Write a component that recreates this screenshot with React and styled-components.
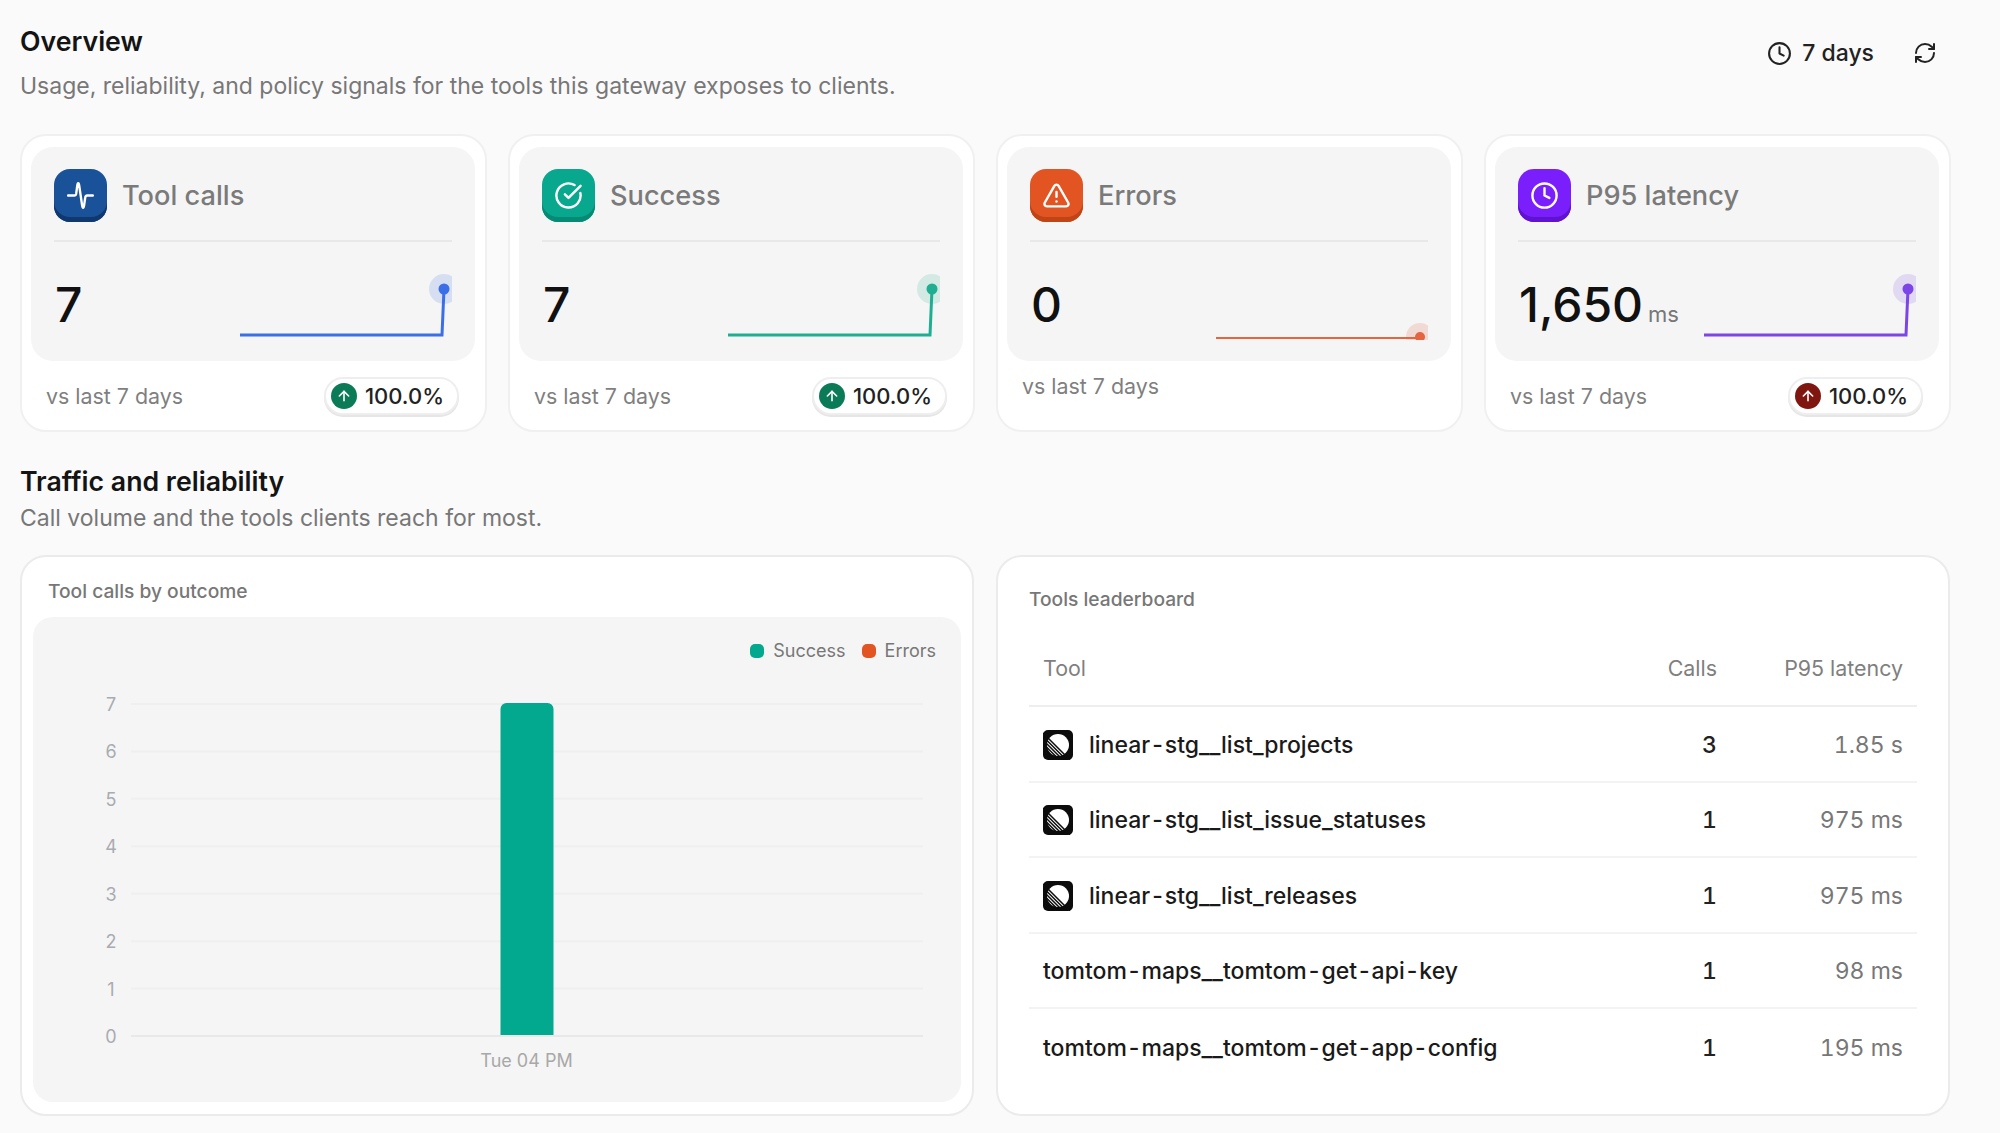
import React from 'react';
import styled, { createGlobalStyle } from 'styled-components';
import { ArrowUp, CircleCheckBig, Clock, RefreshCw, TriangleAlert } from 'lucide-react';

const GlobalStyle = createGlobalStyle`
  html, body {
    margin: 0;
    background: #fafafa;
    font-family: 'Inter', 'Liberation Sans', sans-serif;
    color: #111;
  }
  * { box-sizing: border-box; }
`;

const Page = styled.div`
  width: 2000px;
  height: 1133px;
  overflow: hidden;
  padding: 25px 49px 0 20px;
`;

const TopRow = styled.div`
  display: flex;
  justify-content: space-between;
  align-items: flex-start;
`;

const Heading = styled.h2`
  margin: ${(p) => p.$top || 0}px 0 0;
  font-size: 26.7px;
  line-height: 32px;
  font-weight: 600;
  color: #141414;
`;

const SubHeading = styled.p`
  margin: ${(p) => p.$gap}px 0 0;
  font-size: 23px;
  line-height: 30px;
  color: #777;
`;

const Toolbar = styled.div`
  display: flex;
  align-items: center;
  padding-top: 12px;
  margin-right: 14px;
  font-size: 23px;
  line-height: 32px;
  font-weight: 500;
  color: #222;
`;

const Range = styled.div`
  display: flex;
  align-items: center;
  gap: 10px;
  margin-right: 39px;
`;

const StatGrid = styled.div`
  display: grid;
  grid-template-columns: repeat(4, 467px);
  gap: 21px;
  margin-top: 33px;
`;

const StatCard = styled.div`
  height: 298px;
  padding: 11px 10px 0 9px;
  background: #fff;
  border: 2px solid #f0f0f0;
  border-radius: 26px;
`;

const StatInner = styled.div`
  height: 214px;
  padding: 23px 23px 0;
  background: #f5f5f5;
  border-radius: 22px;
`;

const StatHeader = styled.div`
  display: flex;
  align-items: center;
  gap: 15px;
  height: 72px;
  padding-bottom: 19px;
  border-bottom: 2px solid #e8e8e8;
  font-size: 27.2px;
  font-weight: 500;
  color: #7a7a7a;
`;

const IconTile = styled.div`
  display: flex;
  align-items: center;
  justify-content: center;
  flex: none;
  width: 53px;
  height: 53px;
  border-radius: 16px;
  color: #fff;
  background: ${(p) => p.$bg};
  box-shadow: inset 0 -5px 0 ${(p) => p.$edge};
`;

const StatBody = styled.div`
  display: flex;
  justify-content: space-between;
  align-items: flex-start;
  padding-top: 28px;
`;

const StatValue = styled.div`
  margin: 11px 0 0 1px;
  font-size: 48px;
  line-height: 48px;
  font-weight: 500;
  color: #111;
`;

const Unit = styled.span`
  margin-left: 5px;
  font-size: 22px;
  font-weight: 400;
  color: #777;
`;

const StatFooter = styled.div`
  display: flex;
  justify-content: space-between;
  align-items: center;
  padding: ${(p) => (p.$flat ? '12px' : '16px')} 16px 0 15px;
  font-size: 21.4px;
  line-height: 26px;
  color: #7f7f7f;
`;

const Pill = styled.div`
  display: flex;
  align-items: center;
  gap: 8px;
  height: 38px;
  padding: 0 13px 0 5px;
  border: 2px solid #eeeeee;
  border-radius: 19px;
  background: #fff;
  box-shadow: 0 2px 0 #e6e6e6;
  font-size: 22px;
  font-weight: 500;
  color: #222;
`;

const PillDot = styled.span`
  display: flex;
  align-items: center;
  justify-content: center;
  width: 26px;
  height: 26px;
  border-radius: 50%;
  color: #fff;
  background: ${(p) => p.$bg};
`;

const Split = styled.div`
  display: grid;
  grid-template-columns: 954px 954px;
  justify-content: space-between;
  margin-top: 22px;
  width: 1930px;
`;

const Panel = styled.section`
  height: 561px;
  background: #fff;
  border: 2px solid #ebebeb;
  border-radius: 26px;
`;

const ChartPanel = styled(Panel)`
  padding: 22px 11px 11px;
`;

const TablePanel = styled(Panel)`
  padding: 30px 31px 0 31px;
`;

const PanelTitle = styled.div`
  font-size: 19.2px;
  line-height: 24px;
  font-weight: 500;
  color: #777;
  padding-left: ${(p) => p.$inset || 0}px;
`;

const ChartBox = styled.div`
  margin-top: 14px;
  height: 485px;
  padding-top: 24px;
  background: #f5f5f5;
  border-radius: 20px;
`;

const Legend = styled.div`
  display: flex;
  justify-content: flex-end;
  gap: 16px;
  height: 49px;
  padding-right: 25px;
  font-size: 18px;
  line-height: 20px;
  color: #777;
`;

const LegendItem = styled.div`
  display: flex;
  align-items: center;
  align-self: flex-start;
  gap: 9px;
`;

const Swatch = styled.span`
  width: 14px;
  height: 14px;
  border-radius: 5px;
  background: ${(p) => p.$color};
`;

const ChartSvg = styled.svg`
  display: block;
  font-family: 'Inter', 'Liberation Sans', sans-serif;
`;

const Row = styled.div`
  display: grid;
  grid-template-columns: 1fr 130px 186px;
  align-items: center;
  height: ${(p) => (p.$head ? '76px' : '75.5px')};
  padding: ${(p) => (p.$head ? '0 14px' : '2px 14px 0')};
  border-bottom: ${(p) => (p.$last ? 'none' : `2px solid ${p.$head ? '#eeeeee' : '#f3f3f3'}`)};
  margin-top: ${(p) => (p.$head ? '20px' : 0)};
`;

const HeadCell = styled.div`
  font-size: 21.4px;
  color: #7f7f7f;
  text-align: ${(p) => (p.$right ? 'right' : 'left')};
`;

const ToolName = styled.div`
  display: flex;
  align-items: center;
  gap: 16px;
  font-size: 23px;
  font-weight: 500;
  color: #1a1a1a;
`;

const Hyphen = styled.span`
  margin: 0 2px;
`;

const Calls = styled.div`
  font-size: 23px;
  font-weight: 500;
  font-variant-numeric: tabular-nums;
  color: #222;
  text-align: right;
`;

const Latency = styled.div`
  font-size: 23px;
  font-variant-numeric: tabular-nums;
  color: #777;
  text-align: right;
`;

const PulseIcon = ({ size }) => (
  <svg
    width={(size * 26) / 28}
    height={size}
    viewBox="0 0 26 28"
    fill="none"
    stroke="currentColor"
    strokeWidth="2.3"
    strokeLinecap="round"
    strokeLinejoin="round"
  >
    <path d="M1 14H7C8 14 8.7 13.4 8.9 12.2L9.9 4.5C10.3 1.4 11.4 1.4 11.8 4.5L14.6 23.5C15 26.6 16.1 26.6 16.5 23.5L17.6 16C17.8 14.6 18.5 14 19.6 14H25" />
  </svg>
);

const stats = [
  { label: 'Tool calls', value: '7', Icon: PulseIcon, bg: '#1a5299', edge: '#10386e', color: '#3b6fe8', up: '#0b7a57' },
  { label: 'Success', value: '7', Icon: CircleCheckBig, bg: '#08a88e', edge: '#068a74', color: '#1fae92', up: '#0b7a57' },
  { label: 'Errors', value: '0', Icon: TriangleAlert, bg: '#e25522', edge: '#bf4416', color: '#e4653f', flat: true },
  { label: 'P95 latency', value: '1,650', unit: 'ms', Icon: Clock, bg: '#7a1ffb', edge: '#5f12cf', color: '#7c45e8', up: '#7f1710' },
];

const tools = [
  { name: 'linear-stg__list_projects', calls: 3, latency: '1.85 s', linear: true },
  { name: 'linear-stg__list_issue_statuses', calls: 1, latency: '975 ms', linear: true },
  { name: 'linear-stg__list_releases', calls: 1, latency: '975 ms', linear: true },
  { name: 'tomtom-maps__tomtom-get-api-key', calls: 1, latency: '98 ms' },
  { name: 'tomtom-maps__tomtom-get-app-config', calls: 1, latency: '195 ms' },
];

const Sparkline = ({ color, flat }) => (
  <svg width="212" height={flat ? 70 : 72} viewBox={flat ? '0 0 212 70' : '0 0 212 72'} style={{ flex: 'none' }}>
    {flat ? (
      <>
        <circle cx="204" cy="67" r="14" fill={color} opacity="0.18" />
        <path d="M0 68H204" stroke={color} strokeWidth="2" fill="none" />
        <circle cx="204" cy="67" r="5" fill={color} />
      </>
    ) : (
      <>
        <circle cx="204" cy="19" r="15" fill={color} opacity="0.16" />
        <path d="M0 65H202L204 19" stroke={color} strokeWidth="3" fill="none" />
        <circle cx="204" cy="19" r="5.5" fill={color} />
      </>
    )}
  </svg>
);

const LinearIcon = () => (
  <svg width="30" height="30" viewBox="0 0 30 30" style={{ flex: 'none' }}>
    <rect width="30" height="30" rx="5" fill="#0c0c0c" />
    <circle cx="15" cy="15" r="11" fill="#fff" />
    <path d="M0 3L27 30M0 6.5L23.5 30M0 10L20 30M0 13.5L16.5 30" stroke="#0c0c0c" strokeWidth="1.5" />
  </svg>
);

const OutcomeChart = () => {
  const ticks = [7, 6, 5, 4, 3, 2, 1, 0];
  // chart area: y=14 is 7, y=346 is 0
  const yOf = (t) => 346 - (t * 332) / 7;
  return (
    <ChartSvg width="927" height="412" viewBox="0 0 927 412">
      {ticks.map((t) => (
        <g key={t}>
          <line
            x1="98"
            x2="890"
            y1={yOf(t)}
            y2={yOf(t)}
            stroke={t === 0 ? '#e8e8e8' : '#efefef'}
            strokeWidth="2"
          />
          <text x="78" y={yOf(t) + 7} fontSize="18" fill="#a9abb2" textAnchor="middle">
            {t}
          </text>
        </g>
      ))}
      <path d="M467.5 345V19a6 6 0 0 1 6-6h41a6 6 0 0 1 6 6V345Z" fill="#02a98e" />
      <text x="493.5" y="377" fontSize="18" fill="#a8a8a8" textAnchor="middle">
        Tue 04 PM
      </text>
    </ChartSvg>
  );
};

// the source font draws wider hyphens than Inter
const spacedName = (name) =>
  name.split('-').map((part, i) => (
    <React.Fragment key={i}>
      {i > 0 && <Hyphen>-</Hyphen>}
      {part}
    </React.Fragment>
  ));

export default function App() {
  return (
    <Page>
      <GlobalStyle />
      <TopRow>
        <div>
          <Heading>Overview</Heading>
          <SubHeading $gap={14}>
            Usage, reliability, and policy signals for the tools this gateway exposes to clients.
          </SubHeading>
        </div>
        <Toolbar>
          <Range>
            <Clock size={25} strokeWidth={2} />
            7 days
          </Range>
          <RefreshCw size={24} strokeWidth={2} />
        </Toolbar>
      </TopRow>

      <StatGrid>
        {stats.map(({ label, value, unit, Icon, bg, edge, color, flat, up }) => (
          <StatCard key={label}>
            <StatInner>
              <StatHeader>
                <IconTile $bg={bg} $edge={edge}>
                  <Icon size={29} strokeWidth={2} />
                </IconTile>
                {label}
              </StatHeader>
              <StatBody>
                <StatValue>
                  {value}
                  {unit && <Unit>{unit}</Unit>}
                </StatValue>
                <Sparkline color={color} flat={flat} />
              </StatBody>
            </StatInner>
            <StatFooter $flat={flat}>
              vs last 7 days
              {!flat && (
                <Pill>
                  <PillDot $bg={up}>
                    <ArrowUp size={16} strokeWidth={2.4} />
                  </PillDot>
                  100.0%
                </Pill>
              )}
            </StatFooter>
          </StatCard>
        ))}
      </StatGrid>

      <Heading $top={33}>Traffic and reliability</Heading>
      <SubHeading $gap={6}>Call volume and the tools clients reach for most.</SubHeading>

      <Split>
        <ChartPanel>
          <PanelTitle $inset={15}>Tool calls by outcome</PanelTitle>
          <ChartBox>
            <Legend>
              <LegendItem>
                <Swatch $color="#02a98e" />
                Success
              </LegendItem>
              <LegendItem>
                <Swatch $color="#e25522" />
                Errors
              </LegendItem>
            </Legend>
            <OutcomeChart />
          </ChartBox>
        </ChartPanel>

        <TablePanel>
          <PanelTitle>Tools leaderboard</PanelTitle>
          <Row $head>
            <HeadCell>Tool</HeadCell>
            <HeadCell $right>Calls</HeadCell>
            <HeadCell $right>P95 latency</HeadCell>
          </Row>
          {tools.map((t, i) => (
            <Row key={t.name} $last={i === tools.length - 1}>
              <ToolName>
                {t.linear && <LinearIcon />}
                <span>{spacedName(t.name)}</span>
              </ToolName>
              <Calls>{t.calls}</Calls>
              <Latency>{t.latency}</Latency>
            </Row>
          ))}
        </TablePanel>
      </Split>
    </Page>
  );
}
